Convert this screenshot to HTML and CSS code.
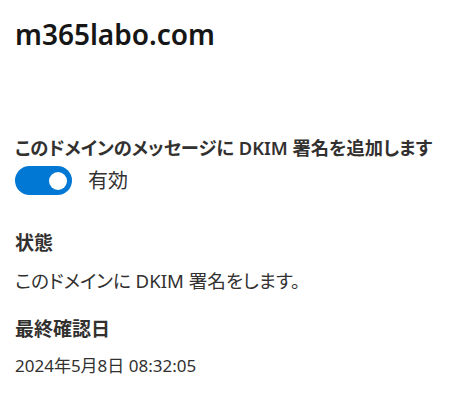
FILE: index.html
```html
<!DOCTYPE html>
<html>
<head>
    <title>DKIM</title>
    <link rel="stylesheet" href="styles.css">
</head>
<body>
    <div class="panel">
        <h1 class="domain">m365labo.com</h1>
        <div class="field first">
            <div class="label">このドメインのメッセージに DKIM 署名を追加します</div>
            <div class="toggle-row">
                <span class="toggle on"><span class="thumb"></span></span>
                <span class="toggle-text">有効</span>
            </div>
        </div>
        <div class="field">
            <div class="label">状態</div>
            <div class="value">このドメインに DKIM 署名をします。</div>
        </div>
        <div class="field">
            <div class="label">最終確認日</div>
            <div class="value small">2024年5月8日 08:32:05</div>
        </div>
    </div>
</body>
</html>
```

FILE: styles.css
```css
* {
    margin: 0;
    padding: 0;
    box-sizing: border-box;
}

body {
    background: #fff;
    font-family: 'Noto Sans', 'Noto Sans CJK JP', sans-serif;
    font-feature-settings: "palt";
    color: #323130;
}

.panel {
    padding: 16px 15px;
}

.domain {
    font-size: 28px;
    font-weight: 600;
    color: #161616;
    line-height: 36px;
    margin-bottom: 83px;
}

.field {
    margin-bottom: 35px;
}

.field + .field {
    margin-bottom: 22px;
}

.label {
    font-size: 18.3px;
    font-weight: 600;
    line-height: 26px;
    white-space: nowrap;
}

.field + .field .label {
    font-size: 19px;
}

.toggle-row {
    display: flex;
    align-items: center;
    gap: 16px;
    margin-top: 5px;
}

.toggle {
    width: 57px;
    height: 29px;
    border-radius: 15px;
    background: #0078d4;
    display: flex;
    align-items: center;
    justify-content: flex-end;
    padding-right: 5px;
}

.thumb {
    width: 18px;
    height: 18px;
    border-radius: 50%;
    background: #fff;
}

.toggle-text {
    font-size: 20px;
    line-height: 29px;
    color: #323130;
}

.value {
    font-size: 18.6px;
    line-height: 26px;
    margin-top: 12px;
}

.value.small {
    font-size: 17px;
    margin-top: 11px;
}
```
